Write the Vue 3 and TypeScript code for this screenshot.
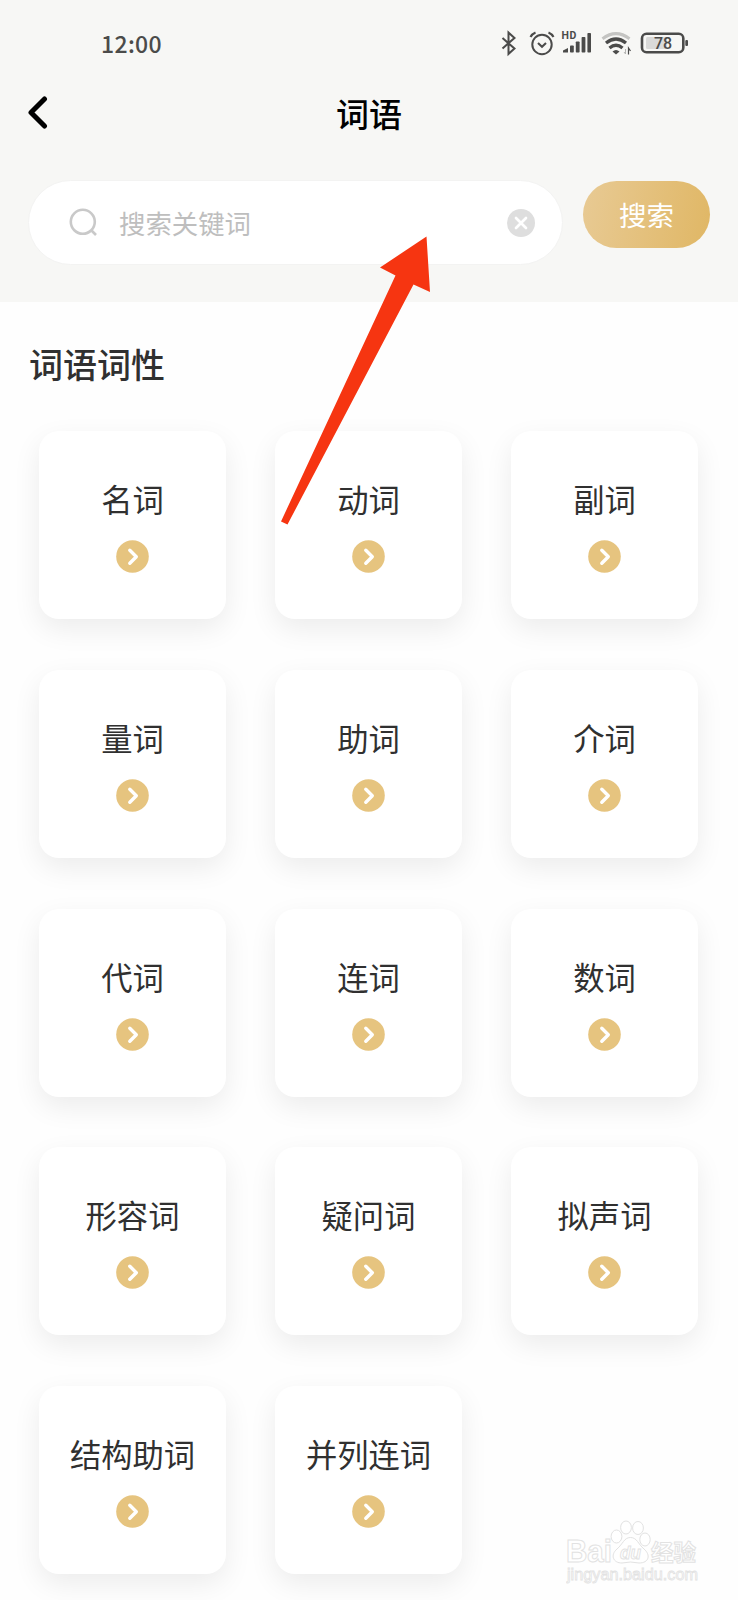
<script setup lang="ts">
const categories: string[] = [
  '名词', '动词', '副词',
  '量词', '助词', '介词',
  '代词', '连词', '数词',
  '形容词', '疑问词', '拟声词',
  '结构助词', '并列连词',
]
</script>

<template>
  <main class="screen">
    <header class="top">
      <div class="status">
        <time class="clock">12:00</time>
        <svg class="status-icons" width="190" height="30" viewBox="0 0 190 30" fill="none" stroke="#4b4b4a">
          <path d="M2.5 9 14.500 19.500 8.500 25V3.500L14.500 9 2.500 19.500" stroke-width="2" />
          <circle cx="42" cy="15.500" r="9.700" stroke-width="2" />
          <path d="m38 14 4 3.700 4-3.700M30.500 8q1.500-3 5-4.500M53.500 8q-1.500-3-5-4.500" stroke-width="2.100" />
          <text class="hd" x="61.500" y="10">HD</text>
          <g fill="#4b4b4a" stroke="none">
            <path d="M63 23.500v-2l5-2.500v4.500z" />
            <rect x="70" y="16.500" width="3.800" height="7" rx=".8" />
            <rect x="75.800" y="12.500" width="3.800" height="11" rx=".8" />
            <rect x="81.600" y="8" width="3.800" height="15.500" rx=".8" />
            <rect x="87.400" y="4" width="3.600" height="19.500" rx=".8" />
          </g>
          <path d="M102.500 9.800Q116-.5 129.500 9.800" stroke="#c4c4c2" stroke-width="3" />
          <path d="M106 14Q116 6 126 14M109.500 19Q116 13.500 122.500 19" stroke-width="3.300" />
          <path d="M112.500 22.500Q116 19.500 119.500 22.500L116 25.500z" fill="#4b4b4a" stroke="none" />
          <path d="M125.500 20v5M124 23l1.500 2" stroke="#b5b5b3" stroke-width="1" />
          <path d="M128.500 25.500V19l2 3" stroke-width="1.200" />
          <rect x="142" y="4.800" width="41.300" height="18.400" rx="4.500" stroke-width="2.600" />
          <rect x="146" y="8" width="21" height="12" rx="1.500" fill="#dadad9" stroke="none" />
          <rect x="185.300" y="11" width="2.700" height="6" rx="1" fill="#4b4b4a" stroke="none" />
          <text class="charge" x="163" y="19.700" text-anchor="middle">78</text>
        </svg>
      </div>
      <nav class="bar">
        <svg class="back" width="20" height="36" viewBox="0 0 20 36" fill="none" stroke="#000" stroke-width="5">
          <path d="M16.500 4 3 17.500 16.500 31" stroke-linecap="round" stroke-linejoin="round" />
        </svg>
        <h1>词语</h1>
      </nav>
      <div class="search-row">
        <div class="search">
          <svg class="lens" width="30" height="30" viewBox="0 0 30 30" fill="none" stroke="#c9c9c9" stroke-width="2.600">
            <circle cx="13.800" cy="13.800" r="12" />
            <path d="m22 22 5 5" />
          </svg>
          <span class="placeholder">搜索关键词</span>
          <svg class="clear" width="28" height="28" viewBox="0 0 28 28">
            <circle cx="14" cy="14" r="14" fill="#dedede" />
            <path d="m9 9 10 10M19 9 9 19" stroke="#fff" stroke-width="2.700" stroke-linecap="round" />
          </svg>
        </div>
        <button class="submit" type="button">搜索</button>
      </div>
    </header>

    <h2>词语词性</h2>
    <section class="grid">
      <article v-for="name in categories" :key="name" class="card">
        <span class="name">{{ name }}</span>
        <svg width="33" height="33" viewBox="0 0 33 33" fill="none">
          <circle cx="16.500" cy="16.500" r="16.300" fill="#e6c47f" />
          <path d="m13.800 10.200 6.500 6.500-6.500 6.500" stroke="#fff" stroke-width="3.400" stroke-linecap="round" stroke-linejoin="round" />
        </svg>
      </article>
    </section>

    <svg class="arrow" width="152" height="290" viewBox="280 236 152 290">
      <path d="M426.500 236.500 380 267.500 395.500 275.500 281 521.500 287.500 524.500 413.500 284.500 430 292z" fill="#f63511" />
    </svg>

    <svg class="watermark" width="140" height="70" viewBox="0 0 140 70" fill="#fff" stroke="#e2e2e2">
      <text class="brand" x="0" y="41.500" textLength="46" lengthAdjust="spacingAndGlyphs">Bai</text>
      <ellipse cx="50.500" cy="16.500" rx="5.400" ry="6.500" />
      <ellipse cx="60" cy="7.500" rx="5.400" ry="6.500" />
      <ellipse cx="72" cy="8" rx="5.400" ry="6.500" />
      <ellipse cx="79" cy="19.500" rx="5.200" ry="6.500" />
      <path d="M64.500 17.500C58 17.500 57 24 51 29C44 35 47 43 56 43Q64.500 41 73 43C83 43 85 35 78 29C72 24 71 17.500 64.500 17.500z" />
      <text class="du" x="54" y="38.500" textLength="21" lengthAdjust="spacingAndGlyphs">du</text>
      <text class="cn" x="85" y="41" textLength="45" lengthAdjust="spacingAndGlyphs">经验</text>
      <text class="site" x="1" y="60" textLength="131" lengthAdjust="spacingAndGlyphs">jingyan.baidu.com</text>
    </svg>
  </main>
</template>

<style>
body {
  background: #fefefe;
}
</style>

<style scoped>
.screen {
  position: relative;
  box-sizing: border-box;
  width: 738px;
  height: 1600px;
  overflow: hidden;
  background: #fefefe;
  color: #303030;
  font-family: "Noto Sans CJK SC", sans-serif;
}
.top {
  box-sizing: border-box;
  height: 302px;
  padding-top: 29px;
  background: #f7f7f5;
}
.status {
  display: flex;
  justify-content: space-between;
  height: 30px;
  padding: 0 48px 0 101px;
}
.clock {
  color: #4b4b4a;
  font: 500 23px/29px "Noto Sans CJK SC", sans-serif;
  letter-spacing: .35px;
}
.hd {
  fill: #4b4b4a;
  stroke: none;
  font: 700 10.500px Roboto, sans-serif;
  letter-spacing: .6px;
}
.charge {
  fill: #4b4b4a;
  stroke: none;
  font: 500 16px Roboto, sans-serif;
}
.bar {
  display: grid;
  grid-template-columns: 100px 1fr 100px;
  align-items: center;
  height: 60px;
  margin-top: 24px;
}
.back {
  margin: 0 0 0 28px;
}
h1 {
  margin: 0;
  color: #000;
  font-size: 33px;
  font-weight: 500;
  line-height: 60px;
  text-align: center;
}
.search-row {
  display: flex;
  align-items: flex-start;
  gap: 20px;
  margin-top: 37px;
  padding-left: 28px;
}
.search {
  display: flex;
  box-sizing: border-box;
  align-items: center;
  width: 535px;
  height: 85px;
  padding: 0 27px 0 40px;
  border: 1px solid #f3f3f2;
  border-radius: 42.500px;
  background: #fff;
}
.placeholder {
  margin-left: 20px;
  color: #bebebe;
  font-size: 26.400px;
  line-height: 40px;
}
.clear {
  margin-left: auto;
}
.submit {
  width: 127px;
  height: 67px;
  margin-top: 1px;
  padding: 0 0 1px;
  border: 0;
  border-radius: 34px;
  background: linear-gradient(100deg, #e8ca94, #e0b765);
  color: #fff;
  font: 400 27.500px/66px "Noto Sans CJK SC", sans-serif;
}
h2 {
  margin: 38px 0 0 29px;
  font-size: 34px;
  font-weight: 500;
  line-height: 48px;
}
.grid {
  display: grid;
  grid-template-columns: repeat(3, 187px);
  grid-auto-rows: 188px;
  column-gap: 49px;
  row-gap: 50.750px;
  margin: 43px 0 0 39px;
}
.card {
  display: flex;
  box-sizing: border-box;
  flex-direction: column;
  align-items: center;
  padding-top: 48px;
  border-radius: 20px;
  background: #fff;
  box-shadow: 0 10px 28px rgba(0, 0, 0, .075);
}
.name {
  height: 61px;
  font-size: 31.300px;
  line-height: 40px;
}
.arrow {
  position: absolute;
  top: 236px;
  left: 280px;
}
.watermark {
  position: absolute;
  top: 1520px;
  left: 566px;
}
.brand {
  font: 700 31px "Liberation Sans", sans-serif;
}
.du {
  font: italic 700 19px "Liberation Sans", sans-serif;
}
.cn {
  font: 700 23px "Noto Sans CJK SC", sans-serif;
}
.site {
  font: 400 16px "Liberation Sans", sans-serif;
  stroke-width: .8;
}
</style>
